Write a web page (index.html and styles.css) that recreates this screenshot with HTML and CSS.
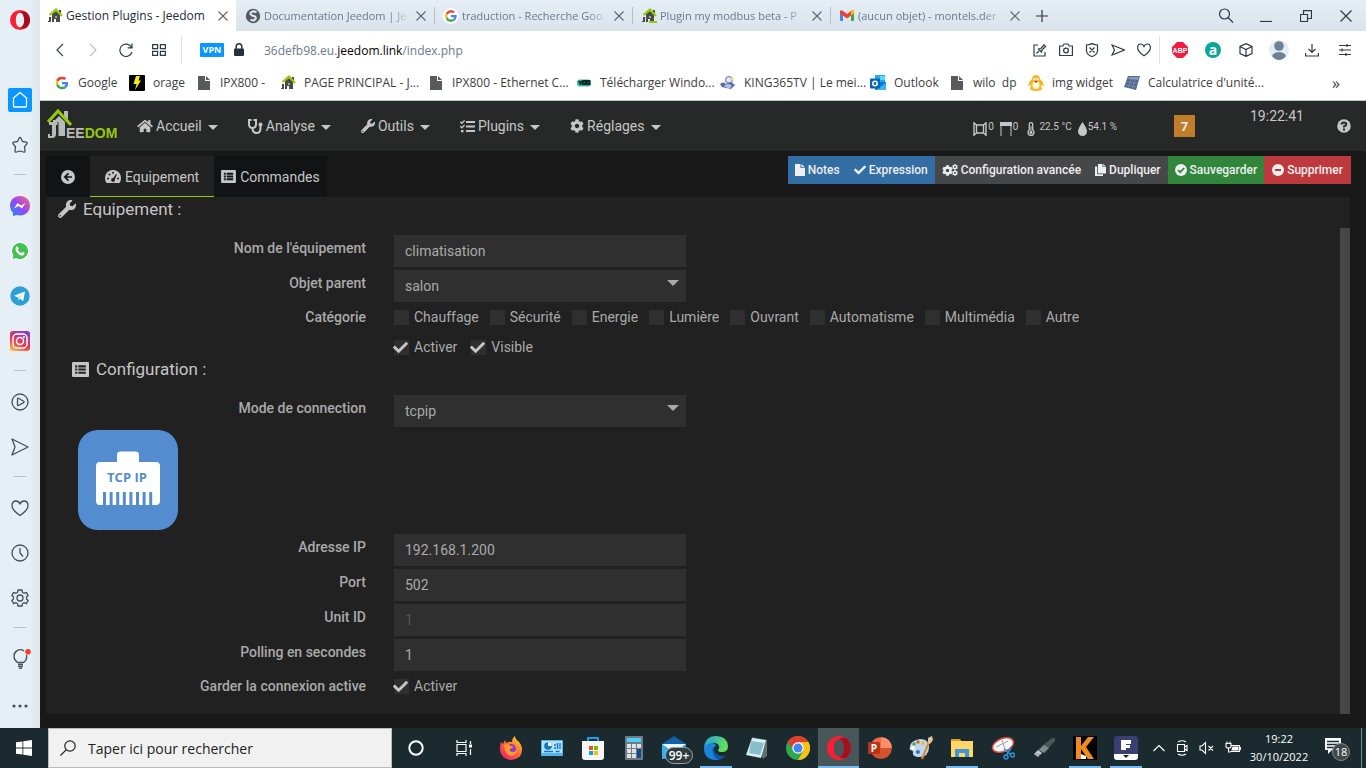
FILE: index.html
```html
<!DOCTYPE html>
<html lang="fr">
<head>
<meta charset="utf-8">
<title>Gestion Plugins - Jeedom</title>
<link rel="stylesheet" href="styles.css">
</head>
<body>
<svg class="defs" aria-hidden="true">
  <symbol id="house" viewBox="0 0 16 16"><path fill="#4a4a4a" d="M5 6l4-3 4 3v8H9v-3H7v3H5z"/><path fill="#4a4a4a" d="M12 2h2v3h-2zM2 9h2v5H1v-1h1z"/><path fill="none" stroke="#94ca02" stroke-width="2.2" d="M2.500 7L9 1.500 15 8"/><path fill="#9aa" d="M8 8h2v2H8z"/></symbol>
  <symbol id="google" viewBox="0 0 48 48"><path fill="#EA4335" d="M24 9.500c3.540 0 6.710 1.220 9.210 3.600l6.850-6.850C35.900 2.380 30.470 0 24 0 14.620 0 6.510 5.380 2.560 13.220l7.980 6.190C12.430 13.720 17.740 9.500 24 9.500z"/><path fill="#4285F4" d="M46.980 24.550c0-1.570-.15-3.090-.38-4.550H24v9.020h12.940c-.58 2.960-2.260 5.480-4.780 7.180l7.730 6c4.510-4.180 7.090-10.360 7.090-17.650z"/><path fill="#FBBC05" d="M10.530 28.590c-.48-1.450-.76-2.990-.76-4.590s.27-3.140.76-4.590l-7.980-6.190C.92 16.460 0 20.120 0 24c0 3.880.92 7.540 2.560 10.780l7.970-6.190z"/><path fill="#34A853" d="M24 48c6.480 0 11.930-2.130 15.890-5.810l-7.730-6c-2.150 1.450-4.920 2.300-8.160 2.300-6.260 0-11.570-4.220-13.470-9.910l-7.980 6.190C6.510 42.620 14.620 48 24 48z"/></symbol>
  <symbol id="close" viewBox="0 0 10 10"><path fill="none" stroke="currentColor" stroke-width="1.100" d="M.5.5l9 9M9.500.5l-9 9"/></symbol>
  <symbol id="page" viewBox="0 0 16 16"><path fill="#58595b" d="M2 1h7v5h5v9H2z"/><path fill="#58595b" d="M10 1l4 4h-4z"/></symbol>
  <symbol id="check" viewBox="0 0 512 512"><path fill="currentColor" d="M173.898 439.404l-166.400-166.400c-9.997-9.997-9.997-26.206 0-36.204l36.203-36.204c9.997-9.998 26.207-9.998 36.204 0L192 312.690 432.095 72.596c9.997-9.997 26.207-9.997 36.204 0l36.203 36.204c9.997 9.997 9.997 26.206 0 36.204l-294.400 294.401c-9.998 9.997-26.207 9.997-36.204-.001z"/></symbol>
  <symbol id="wrench" viewBox="0 0 512 512"><path fill="currentColor" d="M507.730 109.100c-2.240-9.030-13.540-12.090-20.120-5.510l-74.360 74.360-67.880-11.310-11.310-67.880 74.360-74.360c6.620-6.620 3.430-17.900-5.660-20.160-47.380-11.740-99.550.91-136.580 37.930-39.640 39.640-50.550 97.100-34.050 147.200L18.740 402.760c-24.990 24.990-24.990 65.510 0 90.500 24.990 24.990 65.510 24.990 90.500 0l213.210-213.210c50.120 16.710 107.470 5.680 147.370-34.220 37.070-37.070 49.700-89.320 37.910-136.730zM64 472c-13.250 0-24-10.750-24-24 0-13.260 10.750-24 24-24s24 10.740 24 24c0 13.250-10.750 24-24 24z"/></symbol>
  <symbol id="cog" viewBox="0 0 512 512"><path fill="currentColor" d="M487.400 315.700l-42.600-24.600c4.300-23.200 4.300-47 0-70.200l42.600-24.600c4.900-2.800 7.100-8.600 5.500-14-11.100-35.600-30-67.800-54.700-94.600-3.800-4.100-10-5.100-14.800-2.300L380.800 110c-17.900-15.400-38.500-27.300-60.800-35.100V25.800c0-5.600-3.900-10.500-9.400-11.700-36.700-8.200-74.300-7.800-109.200 0-5.500 1.200-9.400 6.100-9.400 11.700V75c-22.200 7.900-42.800 19.800-60.800 35.100L88.700 85.500c-4.900-2.800-11-1.900-14.800 2.300-24.700 26.700-43.600 58.900-54.700 94.600-1.700 5.400.6 11.200 5.500 14L67.300 221c-4.300 23.200-4.300 47 0 70.200l-42.600 24.600c-4.900 2.800-7.100 8.600-5.500 14 11.100 35.600 30 67.800 54.700 94.600 3.800 4.100 10 5.100 14.800 2.300l42.600-24.600c17.900 15.400 38.500 27.300 60.800 35.100v49.200c0 5.600 3.900 10.500 9.400 11.700 36.700 8.200 74.300 7.800 109.200 0 5.500-1.200 9.400-6.100 9.400-11.700v-49.200c22.200-7.900 42.800-19.800 60.800-35.100l42.600 24.600c4.900 2.800 11 1.900 14.800-2.300 24.700-26.700 43.600-58.900 54.700-94.600 1.500-5.500-.7-11.300-5.600-14.100zM256 336c-44.100 0-80-35.900-80-80s35.900-80 80-80 80 35.900 80 80-35.900 80-80 80z"/></symbol>
  <symbol id="list" viewBox="0 0 16 14"><path fill="currentColor" fill-rule="evenodd" d="M1 0h14q1 0 1 1v12q0 1-1 1H1q-1 0-1-1V1q0-1 1-1zM3 3v2h2V3zm0 3v2h2V6zm0 3v2h2V9zm3-6v2h7V3zm0 3v2h7V6zm0 3v2h7V9z"/></symbol>
  <symbol id="opera" viewBox="0 0 24 24"><path fill="#fa1e33" fill-rule="evenodd" d="M12 0a12 12 0 1 0 0 24a12 12 0 1 0 0-24zm0 3.200c3.200 0 5 3.800 5 8.800s-1.800 8.800-5 8.800-5-3.800-5-8.800 1.800-8.800 5-8.800z"/><path fill="#a5101c" d="M12 3.200C15 1 18 1.700 20 3.100a12 12 0 0 1 0 17.800C18 22.300 15 23 12 20.800c3.200 0 5-3.800 5-8.800s-1.800-8.800-5-8.800z"/></symbol>
</svg>

<div class="screen">
  <aside class="sidebar">
    <a class="side-logo" href="#" aria-label="Opera"><svg width="20" height="20"><use href="#opera"/></svg></a>
    <a class="side-item" href="#" aria-label="Accueil"><svg width="24" height="24" viewBox="0 0 24 24"><rect width="24" height="24" rx="2" fill="#0a96ff"/><path fill="none" stroke="#fff" stroke-width="1.300" stroke-linejoin="round" d="M5.500 10L12 4.500l6.500 5.500v8q0 1-1 1h-11q-1 0-1-1z"/></svg></a>
    <a class="side-item" href="#" aria-label="Favoris"><svg class="line" width="18" height="18" viewBox="0 0 18 18"><path d="M9 1.500q.6 0 1 .8L11.500 5.500l3.800.7q1.500.4.500 1.700L13.500 11l.5 4q0 1.600-1.500 1L9 15l-3.500 1q-1.500.6-1.500-1l.5-4L2.200 7.900q-1-1.300.5-1.700l3.800-.7L8 2.300q.4-.8 1-.8z"/></svg></a>
    <hr>
    <a class="side-item" href="#" aria-label="Messenger"><svg width="20" height="20" viewBox="0 0 20 20"><defs><linearGradient id="ms" x1="0" y1="1" x2="1" y2="0"><stop offset="0" stop-color="#1095ff"/><stop offset=".5" stop-color="#9a45f5"/><stop offset="1" stop-color="#ff6b72"/></linearGradient></defs><path fill="url(#ms)" d="M10 0c6 0 10 4.300 10 9.700s-4 9.700-10 9.700q-1.500 0-3-.4L3 20v-3Q0 14 0 9.700C0 4.300 4 0 10 0z"/><path fill="#fff" d="M4 12.500L7.500 7l3.500 2.500L15.500 7 12 12.500 8.500 10z"/></svg></a>
    <a class="side-item" href="#" aria-label="WhatsApp"><svg width="20" height="20" viewBox="0 0 20 20"><path fill="#fff" d="M10 .5a9.500 9.500 0 1 1-4.500 17.900L.7 19.500 2 14.800A9.500 9.500 0 0 1 10 .5z"/><path fill="#40c351" d="M10 2a8 8 0 1 1-4 14.900L2.500 18l1-3.500A8 8 0 0 1 10 2z"/><path fill="#fff" d="M6.500 5.500h1.300l1 2.300-.9 1.200q1 2 3.200 3l1.200-1.200 2.200 1.200q0 2.500-2.700 2.500C9 14.500 5.500 10.800 5.500 8q0-1.500 1-2.500z"/></svg></a>
    <a class="side-item" href="#" aria-label="Telegram"><svg width="20" height="20" viewBox="0 0 20 20"><circle cx="10" cy="10" r="9.700" fill="#2ca0d9"/><path fill="#fff" d="M4 9.800L15 5.500 13.200 15l-3.500-2.500L8 14.500v-3z"/><path fill="#b8dcef" d="M8 11.500l5-4-3.500 5L8 14.500z"/></svg></a>
    <a class="side-item" href="#" aria-label="Instagram"><svg width="20" height="20" viewBox="0 0 20 20"><defs><linearGradient id="ig" x1=".2" y1="1" x2=".7" y2="0"><stop offset="0" stop-color="#ffb74a"/><stop offset=".4" stop-color="#ef3b4c"/><stop offset="1" stop-color="#8a3bc8"/></linearGradient></defs><rect width="20" height="20" rx="3" fill="url(#ig)"/><g fill="none" stroke="#fff" stroke-width="1.500"><rect x="3" y="3" width="14" height="14" rx="4"/><circle cx="10" cy="10" r="3.500"/></g><circle cx="14" cy="6" r="1" fill="#fff"/></svg></a>
    <hr>
    <a class="side-item" href="#" aria-label="Lecteur"><svg class="line" width="18" height="18" viewBox="0 0 18 18"><circle cx="9" cy="9" r="8"/><path d="M6.500 6q0-1 1-.7l5.200 2.900q.8.700 0 1.400l-5.200 2.900q-1 .3-1-.7z"/></svg></a>
    <a class="side-item" href="#" aria-label="Mon flux"><svg class="line" width="18" height="18" viewBox="0 0 18 18"><path d="M1 1l16 8L1 17l3-8z"/></svg></a>
    <hr>
    <a class="side-item" href="#" aria-label="Signets"><svg class="line" width="18" height="18" viewBox="0 0 18 18"><path d="M9 16.500Q1 11 1 6.500 1 2 5 2q2.800 0 4 3 1.200-3 4-3 4 0 4 4.500Q17 11 9 16.500z"/></svg></a>
    <a class="side-item" href="#" aria-label="Historique"><svg class="line" width="18" height="18" viewBox="0 0 18 18"><circle cx="9" cy="9" r="8"/><path d="M9 4v5l3 3.500"/></svg></a>
    <a class="side-item" href="#" aria-label="Paramètres"><svg class="line" width="18" height="18" viewBox="0 0 18 18"><circle cx="9" cy="9" r="3"/><path d="M7 1h4l.5 2.500 1.500.8 2.300-.9 1.900 3.200L15.500 8v2l1.700 1.400-1.900 3.200-2.300-.9-1.500.8L11 17H7l-.5-2.500-1.500-.8-2.300.9L.8 11.400 2.500 10V8L.8 6.600l1.900-3.200 2.300.9 1.500-.8z"/></svg></a>
    <hr>
    <a class="side-item" href="#" aria-label="Astuces"><svg class="line" width="22" height="20" viewBox="0 0 22 20"><path d="M8.500 13.500Q5 11 5 7.500A6.300 6.300 0 0 1 15 2M17.500 6q1 4.500-3 7.500M8.500 13.500h6M9 15.500h5M9 17.500h5M10 19.300h3"/><circle cx="19" cy="2.800" r="2.800" fill="#ff3b2f" stroke="none"/></svg></a>
    <a class="side-item side-more" href="#" aria-label="Plus"><svg width="16" height="4" viewBox="0 0 16 4" fill="#43505e"><circle cx="2" cy="2" r="1.600"/><circle cx="8" cy="2" r="1.600"/><circle cx="14" cy="2" r="1.600"/></svg></a>
  </aside>

  <div class="browser">
    <header class="tabbar">
      <div class="tab tab-active"><svg width="16" height="16"><use href="#house"/></svg><span>Gestion Plugins - Jeedom</span><button aria-label="Fermer"><svg width="10" height="10"><use href="#close"/></svg></button></div>
      <div class="tab"><svg width="16" height="16" viewBox="0 0 16 16"><circle cx="8" cy="8" r="7.200" fill="#555b61"/><path fill="none" stroke="#e3eaf2" stroke-width="2" d="M11.500 4.500Q9 2.500 6.500 4T7 7.500l3 1q2 1.500-.5 3.500-2 1-4-.5"/></svg><span>Documentation Jeedom | Je</span><button aria-label="Fermer"><svg width="10" height="10"><use href="#close"/></svg></button></div>
      <div class="tab"><svg class="disc" width="16" height="16"><use href="#google"/></svg><span>traduction - Recherche Goo</span><button aria-label="Fermer"><svg width="10" height="10"><use href="#close"/></svg></button></div>
      <div class="tab"><svg width="16" height="16" viewBox="0 0 16 16"><use href="#house"/><path fill="#94ca02" d="M8 13h8v2H8z"/></svg><span>Plugin my modbus beta - P</span><button aria-label="Fermer"><svg width="10" height="10"><use href="#close"/></svg></button></div>
      <div class="tab"><svg width="16" height="16" viewBox="0 0 16 16"><path fill="#4285f4" d="M1 4h3v9H2q-1 0-1-1z"/><path fill="#34a853" d="M12 4h3v8q0 1-1 1h-2z"/><path fill="#ea4335" d="M1 3q1-1.500 3 0l4 3 4-3q2-1.500 3 0v2.500L8 10.500 1 5.500z"/><path fill="#fbbc04" d="M12 3q2-1.500 3 0v2.500l-3 2z"/></svg><span>(aucun objet) - montels.der</span><button aria-label="Fermer"><svg width="10" height="10"><use href="#close"/></svg></button></div>
      <button class="newtab" aria-label="Nouvel onglet"><svg width="12" height="12" viewBox="0 0 12 12"><path stroke="#333" stroke-width="1.200" d="M6 0v12M0 6h12"/></svg></button>
      <div class="winctl">
        <button aria-label="Rechercher"><svg class="dark" width="16" height="16" viewBox="0 0 16 16"><circle cx="6.500" cy="6" r="5"/><path d="M10 9.500l5 5"/></svg></button>
        <button aria-label="Réduire"><svg class="dark" width="12" height="12" viewBox="0 0 12 12"><path d="M0 11.500h12"/></svg></button>
        <button aria-label="Restaurer"><svg class="dark" width="12" height="12" viewBox="0 0 12 12"><path d="M.5 4.500h7v7h-7zM3.500 4V.6h8v7.900H8"/></svg></button>
        <button aria-label="Fermer la fenêtre"><svg class="dark" width="12" height="12" viewBox="0 0 12 12"><path d="M.5.5l11 11M11.500.5l-11 11"/></svg></button>
      </div>
    </header>

    <nav class="toolbar">
      <button aria-label="Retour"><svg class="dark" width="14" height="14" viewBox="0 0 14 14"><path d="M10 .8L4 7l6 6.200"/></svg></button>
      <button aria-label="Avancer"><svg class="dark faded" width="14" height="14" viewBox="0 0 14 14"><path d="M4 .8L10 7l-6 6.200"/></svg></button>
      <button aria-label="Recharger"><svg class="dark" width="14" height="14" viewBox="0 0 14 14"><path d="M12.600 4.500A6.200 6.200 0 1 0 13 9M13 .5v4.300H8.700"/></svg></button>
      <button aria-label="Accès rapide"><svg class="dark" width="14" height="12" viewBox="0 0 14 12"><path d="M.6.6h5v4h-5zM8.400.6h5v4h-5zM.6 7.400h5v4h-5zM8.400 7.400h5v4h-5z"/></svg></button>
      <i class="vsep"></i>
      <span class="vpn">VPN</span>
      <svg class="lock" width="12" height="14" viewBox="0 0 12 14"><rect x="1" y="5.500" width="10" height="7.500" rx="1" fill="#25323c"/><path fill="none" stroke="#25323c" stroke-width="1.500" d="M3.200 6V3.600a2.800 2.800 0 0 1 5.600 0V6"/></svg>
      <div class="url" role="textbox" aria-label="Adresse">36defb98.eu.<b>jeedom.link</b>/index.php</div>
      <div class="tools">
        <button aria-label="Annoter"><svg class="dark" width="14" height="14" viewBox="0 0 14 14"><path d="M5 2H1v11h11V9M3.500 10.500L6 8M5 5.500l4 4M5.500 6L8 5.500 11 2l1.500 1.500L9 7l-.5 2M10.500 1.500l2.500 2.500"/></svg></button>
        <button aria-label="Capture"><svg class="dark" width="14" height="14" viewBox="0 0 14 14"><path d="M.6 3h3.200L5 1h4l1.200 2h3.200v9.500H.6z"/><circle cx="7" cy="7.500" r="2.400"/></svg></button>
        <button aria-label="Bloqueur"><svg class="dark" width="14" height="14" viewBox="0 0 14 14"><path d="M1.500 2Q4 2 7 .6 10 2 12.500 2v6Q12 12 7 13.500 2 12 1.500 8zM4.500 4.500l5 5M9.500 4.500l-5 5"/></svg></button>
        <button aria-label="Envoyer"><svg class="dark" width="14" height="14" viewBox="0 0 14 14"><path d="M1 2l12.500 5L1 12l2.500-5z"/></svg></button>
        <button aria-label="Favori"><svg class="dark" width="14" height="14" viewBox="0 0 14 14"><path d="M7 12.800Q.6 8.500.6 4.800.6 1 3.800 1 6 1 7 3.400 8 1 10.200 1q3.200 0 3.200 3.800Q13.400 8.500 7 12.800z"/></svg></button>
      </div>
      <i class="vsep"></i>
      <div class="exts">
        <button aria-label="Adblock Plus"><svg width="16" height="16" viewBox="0 0 16 16"><path fill="#ef1d41" d="M5 0h6l5 5v6l-5 5H5l-5-5V5z"/><text x="8" y="10.500" text-anchor="middle" class="abp">ABP</text></svg></button>
        <button aria-label="Alexa"><svg width="16" height="16" viewBox="0 0 16 16"><circle cx="8" cy="8" r="8" fill="#07a897"/><text x="8" y="12.500" text-anchor="middle" class="alexa">a</text></svg></button>
        <button aria-label="Extensions"><svg class="dark" width="14" height="14" viewBox="0 0 14 14"><path d="M7 .6l6 2.900v7L7 13.400l-6-2.900v-7zM1 3.500l6 3 6-3M7 6.500v7"/></svg></button>
        <button aria-label="Profil"><svg width="20" height="20" viewBox="0 0 20 20"><circle cx="10" cy="10" r="10" fill="#e3ecf4"/><circle cx="10" cy="6" r="4.800" fill="#6d8195"/><path fill="#6d8195" d="M3 16q2-4 7-4t7 4q-3 4-7 4t-7-4z"/></svg></button>
        <button aria-label="Téléchargements"><svg class="dark" width="14" height="14" viewBox="0 0 14 14"><path d="M7 1v8.500M3.500 6L7 9.500 10.500 6M.6 10v3h12.800v-3"/></svg></button>
        <button aria-label="Réglages rapides"><svg class="dark" width="12" height="12" viewBox="0 0 12 12"><path d="M0 1.500h12M0 6h12M0 10.500h12M8 0v3M3 4.500v3M7 9v3"/></svg></button>
      </div>
    </nav>

    <nav class="bookmarks">
      <a href="#"><svg width="16" height="16" viewBox="-2 -2 20 20"><use href="#google" width="16" height="16"/></svg>Google</a>
      <a href="#"><svg width="16" height="16" viewBox="0 0 16 16"><rect width="16" height="16" rx="1" fill="#000"/><path fill="#f7ec13" d="M7 1h4L9.500 5.500H12L6 15l1.500-6H4.500z"/></svg>orage</a>
      <a href="#"><svg width="16" height="16"><use href="#page"/></svg>IPX800 -</a>
      <a href="#"><svg width="16" height="16"><use href="#house"/></svg>PAGE PRINCIPAL - J...</a>
      <a href="#"><svg width="16" height="16"><use href="#page"/></svg>IPX800 - Ethernet C...</a>
      <a href="#"><svg width="16" height="16" viewBox="0 0 16 16"><rect x="1" y="4.500" width="14" height="7" rx="3" fill="#2fb9a3"/><path stroke="#092b26" stroke-width="1.800" fill="none" d="M3 6l1.500 2.500L6 6M4.500 8v2M7 6h2.500v3H7zM11 6h2.500v3H11z"/></svg>Télécharger Windo...</a>
      <a href="#"><svg width="16" height="16" viewBox="0 0 16 16"><circle cx="9" cy="5" r="3.500" fill="#dbe6fa" stroke="#5a6da8"/><path fill="#5969a5" d="M0 9q3-3 6 0 4-4 9 1l-4 4-9-2z"/><path fill="#b7c3e6" d="M4 11q4-4 8 0l-3 3z"/><circle cx="12" cy="4" r="1.500" fill="#f5d77e"/></svg>KING365TV | Le mei...</a>
      <a href="#"><svg width="16" height="16" viewBox="0 0 16 16"><path fill="#28a8ea" d="M5 0h10v8H5z"/><path fill="#50d9ff" d="M10 1h5v4h-5z"/><path fill="#0f78d4" d="M5 7h11v8H5z"/><path fill="#35b8f1" d="M16 8v7H6z"/><rect y="3.500" width="10" height="10" rx="1" fill="#0564b5"/><circle cx="5" cy="8.500" r="2.200" fill="none" stroke="#fff" stroke-width="1.500"/></svg>Outlook</a>
      <a href="#" class="pre"><svg width="16" height="16"><use href="#page"/></svg>wilo  dp</a>
      <a href="#"><svg width="16" height="16" viewBox="0 0 16 16"><path fill="#f5b82e" d="M8 0q4 0 4 4 3 2 4 7l-3-1 1 5q-6 2-12 0l1-5-3 1q1-5 4-7 0-4 4-4z"/><ellipse cx="8" cy="10" rx="3.500" ry="4" fill="#fff6d8"/><circle cx="6.500" cy="4" r="1.100" fill="#fff"/><circle cx="9.500" cy="4" r="1.100" fill="#fff"/><path fill="#7a4d12" d="M6 6h4l-2 2z"/></svg>img widget</a>
      <a href="#"><svg width="16" height="16" viewBox="0 0 16 16"><path fill="#53688f" d="M4 1h12l-4 14L0 12z"/><path fill="#8798b8" d="M5 2h10l-1 3-10-1z"/><path stroke="#7b8db0" stroke-width=".8" d="M3 7l10 1.500M2 10l10 2M7 5L4 13M11 5L8 14"/></svg>Calculatrice d'unité...</a>
      <button aria-label="Plus de signets">»</button>
    </nav>

    <div class="jeedom">
      <header class="jbar">
        <a class="logo" href="#" aria-label="Jeedom"><svg width="70" height="32" viewBox="0 0 70 32"><path fill="#b9bbb9" d="M6 14l6-6 6 6v14h-7V17h-2v9q0 4-4 4H1v-4h2v2h2V17H2v-3zM6 12h3v2H6z"/><path fill="#b9bbb9" d="M17 3h4v9l-4-4z"/><path stroke="#272928" d="M11 14v14"/><path fill="none" stroke="#93c90f" stroke-width="3.200" d="M1 14L11 3l13 14"/><text class="logo-text" x="19" y="30"><tspan fill="#b9bbb9">EE</tspan><tspan fill="#93c90f">DOM</tspan></text></svg></a>
        <nav class="jmenu">
          <a href="#"><svg width="16" height="14" viewBox="0 0 576 512"><path fill="currentColor" d="M280.370 148.260L96 300.110V464a16 16 0 0 0 16 16l112.060-.29a16 16 0 0 0 15.920-16V368a16 16 0 0 1 16-16h64a16 16 0 0 1 16 16v95.640a16 16 0 0 0 16 16.050L464 480a16 16 0 0 0 16-16V300L295.670 148.260a12.190 12.190 0 0 0-15.300 0zM571.600 251.470L488 182.560V44.050a12 12 0 0 0-12-12h-56a12 12 0 0 0-12 12v72.610L318.470 43a48 48 0 0 0-61 0L4.340 251.470a12 12 0 0 0-1.600 16.900l25.500 31A12 12 0 0 0 45.150 301l235.220-193.740a12.190 12.190 0 0 1 15.300 0L530.900 301a12 12 0 0 0 16.900-1.600l25.500-31a12 12 0 0 0-1.700-16.930z"/></svg>Accueil<i class="caret"></i></a>
          <a href="#"><svg width="15" height="15" viewBox="0 0 15 15"><path fill="none" stroke="currentColor" stroke-width="2" d="M3.500 1H1v4q0 4 3.500 4T8 5V1H5.500M4.500 9q0 5 4 5t4-5V7"/><circle cx="12.500" cy="5.500" r="2" fill="currentColor"/></svg>Analyse<i class="caret"></i></a>
          <a href="#"><svg width="14" height="14"><use href="#wrench"/></svg>Outils<i class="caret"></i></a>
          <a href="#"><svg width="15" height="13" viewBox="0 0 15 13"><path fill="currentColor" d="M6 1h9v2H6zM6 5.500h9v2H6zM6 10h9v2H6zM1 10h2.500v2.300H1z"/><path fill="none" stroke="currentColor" stroke-width="1.400" d="M.3 1.800l1.500 1.500L4.600.5M.3 6.300l1.500 1.500L4.600 5"/></svg>Plugins<i class="caret"></i></a>
          <a href="#"><svg width="14" height="14"><use href="#cog"/></svg>Réglages<i class="caret"></i></a>
        </nav>
        <div class="summary">
          <svg width="14" height="14" viewBox="0 0 14 14"><path fill="none" stroke="currentColor" stroke-width="1.400" d="M1 0v14M13 0v14M3.500 3h7v8h-7zM1 1l2.500 2M13 1l-2.500 2M1 13l2.500-2M13 13l-2.500-2"/></svg><span>0</span>
          <svg width="12" height="14" viewBox="0 0 12 14"><path fill="currentColor" d="M0 0h12v4H0z"/><path stroke="currentColor" d="M1 4v10M11 4v10"/></svg><span>0</span>
          <svg class="thermo" width="8" height="14" viewBox="0 0 8 14"><path fill="none" stroke="currentColor" stroke-width="1.300" d="M2.300 8V2.300a1.700 1.700 0 0 1 3.400 0V8a3 3 0 1 1-3.400 0z"/><circle cx="4" cy="10.500" r="1.600" fill="currentColor"/><path stroke="currentColor" d="M4 4v6"/></svg><span>22.5 °C</span>
          <svg width="9" height="14" viewBox="0 0 9 14"><path fill="currentColor" d="M4.500 0Q9 6.500 9 9.500a4.500 4.500 0 0 1-9 0Q0 6.500 4.500 0z"/></svg><span>54.1 %</span>
        </div>
        <a class="count" href="#">7</a>
        <span class="jclock">19:22:41</span>
        <a class="help" href="#" aria-label="Aide"><svg width="14" height="14" viewBox="0 0 14 14"><circle cx="7" cy="7" r="6.800" fill="currentColor"/><path fill="none" stroke="#272928" stroke-width="2" d="M4.500 5.500Q4.800 3.500 7 3.500t2.300 1.800Q9.300 6.500 7 7.500v1M7 9.500v2"/></svg></a>
      </header>

      <main class="jmain">
        <div class="topline">
          <nav class="jtabs">
            <a class="jback" href="#" aria-label="Retour"><svg width="14" height="14" viewBox="0 0 14 14"><circle cx="7" cy="7" r="7" fill="currentColor"/><path fill="none" stroke="#111315" stroke-width="1.700" d="M7.500 3.300L3.800 7l3.700 3.700M4 7h7"/></svg></a>
            <a class="jtab jtab-on" href="#"><svg width="16" height="14" viewBox="0 0 16 14"><path fill="currentColor" d="M8 0a8 8 0 0 1 8 8q0 3-1.500 5h-13Q0 11 0 8a8 8 0 0 1 8-8z"/><g fill="#222"><circle cx="3" cy="8.500" r="1"/><circle cx="4.500" cy="4.500" r="1"/><circle cx="8" cy="2.800" r="1"/><circle cx="13" cy="8.500" r="1"/><circle cx="8" cy="10" r="1.900"/><path d="M7.500 9l3.500-5 1 .6L9.500 10z"/></g></svg>Equipement</a>
            <a class="jtab" href="#"><svg width="15" height="13"><use href="#list"/></svg>Commandes</a>
          </nav>
          <div class="actions">
            <button class="blue"><svg width="10" height="12" viewBox="0 0 10 12"><path fill="currentColor" d="M0 0h5.500v4H10v8H0zM6.500 0L10 3.200H6.500z"/></svg>Notes</button>
            <button class="blue"><svg width="12" height="12"><use href="#check"/></svg>Expression</button>
            <button class="grey"><svg width="16" height="12" viewBox="0 0 16 12"><svg width="11" height="11" y="1"><use href="#cog"/></svg><svg width="6" height="6" x="10"><use href="#cog"/></svg><svg width="6" height="6" x="10" y="6"><use href="#cog"/></svg></svg>Configuration avancée</button>
            <button class="grey"><svg width="11" height="12" viewBox="0 0 11 12"><path fill="currentColor" d="M3 0h4.500v3H11v6.500H3zM8.200 0L11 2.500H8.200zM0 2.500h2.200v7.800H8V12H0z"/></svg>Dupliquer</button>
            <button class="green"><svg width="12" height="12" viewBox="0 0 12 12"><circle cx="6" cy="6" r="6" fill="currentColor"/><path fill="none" stroke="#31863b" stroke-width="1.700" d="M3 6l2.200 2.200L9.200 4"/></svg>Sauvegarder</button>
            <button class="red"><svg width="12" height="12" viewBox="0 0 12 12"><circle cx="6" cy="6" r="6" fill="currentColor"/><path stroke="#bd393d" stroke-width="2" d="M3 6h6"/></svg>Supprimer</button>
          </div>
        </div>

        <form class="panel">
          <h2><svg width="18" height="18"><use href="#wrench"/></svg>Equipement :</h2>
          <div class="row"><label for="nom">Nom de l'équipement</label><div class="field"><input id="nom" type="text" value="climatisation"></div></div>
          <div class="row"><label for="obj">Objet parent</label><div class="field select"><select id="obj"><option>salon</option></select></div></div>
          <div class="row checks"><span class="lab">Catégorie</span><div class="opts">
            <label><input type="checkbox">Chauffage</label><label><input type="checkbox">Sécurité</label><label><input type="checkbox">Energie</label><label><input type="checkbox">Lumière</label><label><input type="checkbox">Ouvrant</label><label><input type="checkbox">Automatisme</label><label><input type="checkbox">Multimédia</label><label><input type="checkbox">Autre</label></div></div>
          <div class="row checks last"><span class="lab"></span><div class="opts wide">
            <label><span class="tick"><input type="checkbox" checked><svg width="15" height="15"><use href="#check"/></svg></span>Activer</label><label><span class="tick"><input type="checkbox" checked><svg width="15" height="15"><use href="#check"/></svg></span>Visible</label></div></div>
          <h2 class="sub"><svg width="17" height="15"><use href="#list"/></svg>Configuration :</h2>
          <div class="row"><label for="mode">Mode de connection</label><div class="field select"><select id="mode"><option>tcpip</option></select></div></div>
          <svg class="tcp" width="100" height="100" viewBox="0 0 100 100" role="img" aria-label="TCP IP"><rect width="100" height="100" rx="20" fill="#538dd0"/><path fill="#fff" d="M22 32h17v-7q0-3.500 3.500-3.500h15q3.500 0 3.500 3.500v7h17q4 0 4 4v35q0 4-4 4H22q-4 0-4-4V36q0-4 4-4z"/><path fill="#538dd0" d="M25 62h3v13h-3zM31.600 62h3v13h-3zM38.200 62h3v13h-3zM44.800 62h3v13h-3zM51.400 62h3v13h-3zM58 62h3v13h-3zM64.600 62h3v13h-3zM71.200 62h3v13h-3z"/><text class="tcp-text" x="49" y="52" text-anchor="middle">TCP IP</text></svg>
          <div class="row"><label for="ip">Adresse IP</label><div class="field"><input id="ip" type="text" value="192.168.1.200"></div></div>
          <div class="row"><label for="port">Port</label><div class="field"><input id="port" type="text" value="502"></div></div>
          <div class="row"><label for="unit">Unit ID</label><div class="field"><input id="unit" type="text" placeholder="1"></div></div>
          <div class="row"><label for="poll">Polling en secondes</label><div class="field"><input id="poll" type="text" value="1"></div></div>
          <div class="row checks"><label for="keep" class="lab">Garder la connexion active</label><div class="opts"><label><span class="tick"><input id="keep" type="checkbox" checked><svg width="15" height="15"><use href="#check"/></svg></span>Activer</label></div></div>
          <i class="scroll"></i>
        </form>
      </main>
    </div>
  </div>
</div>

<footer class="taskbar">
  <button class="start" aria-label="Démarrer"><svg width="16" height="16" viewBox="0 0 16 16" fill="#fff"><path d="M0 2.300L6.500 1.400v6.200H0zM7.300 1.300L16 0v7.600H7.300zM0 8.400h6.500v6.200L0 13.700zM7.300 8.400H16V16l-8.700-1.300z"/></svg></button>
  <label class="search"><svg width="16" height="16" viewBox="0 0 16 16"><circle cx="10" cy="6" r="5.200" fill="none" stroke="#222" stroke-width="1.200"/><path stroke="#222" stroke-width="1.200" d="M6.300 9.700L.5 15.500"/></svg><input type="search" placeholder="Taper ici pour rechercher" aria-label="Rechercher"></label>
  <div class="sys">
    <button aria-label="Cortana"><svg width="16" height="16" viewBox="0 0 16 16"><circle cx="8" cy="8" r="6.700" fill="none" stroke="#fff" stroke-width="2"/></svg></button>
    <button aria-label="Vue des tâches"><svg width="16" height="16" viewBox="0 0 16 16"><path fill="none" stroke="#fff" stroke-width="1.200" d="M1 0v2.500h9V0M1 16v-2.500h9V16M1 4.500h9v7H1zM14.500 1v3M14.500 9v6"/><path fill="#fff" d="M13 4.500h3v3h-3z"/></svg></button>
  </div>
  <div class="apps">
    <button aria-label="Firefox"><svg width="24" height="24" viewBox="0 0 24 24"><defs><linearGradient id="ff" x1="1" y1="0" x2=".2" y2="1"><stop offset="0" stop-color="#ffe226"/><stop offset=".5" stop-color="#ff7139"/><stop offset="1" stop-color="#ef1c6c"/></linearGradient></defs><path fill="url(#ff)" d="M2 6l2 2 2-4 1 3q3-2 6-1 0-4 3-6 0 3 4 6 3 3 3 8 0 9-11 10Q2 23 1 14q0-5 1-8z"/><circle cx="12" cy="13" r="5" fill="#8a3bd0"/><path fill="#ff9a2c" d="M5 9q4-2 7 1l3 1-4 2q-1 3 3 3 4-1 4-4 1 7-6 8-6-1-7-11z"/></svg></button>
    <button aria-label="Panneau de configuration"><svg width="22" height="16" viewBox="0 0 22 16"><rect width="22" height="16" rx="1" fill="#50b5ec"/><path fill="#b7e2f8" d="M1 1h20v12H1z"/><circle cx="7" cy="6" r="3.800" fill="#1376c4"/><path fill="#fff" d="M7 6V2.200A3.800 3.800 0 0 1 10.800 6z"/><path stroke="#1376c4" stroke-width="1.400" d="M13 5h2M13 8h2M3 11.500h9M14.500 11.500h4M16.500 3v6M19 3v6"/></svg></button>
    <button aria-label="Microsoft Store"><svg width="24" height="24" viewBox="0 0 24 24"><path fill="none" stroke="#18a0ef" stroke-width="2" d="M7 6V2h10v4"/><path fill="#f6f6f6" d="M1 5h22v16q0 3-3 3H4q-3 0-3-3z"/><path fill="#f25022" d="M8 10h4v4H8z"/><path fill="#7fba00" d="M13 10h4v4h-4z"/><path fill="#00a4ef" d="M8 15h4v4H8z"/><path fill="#ffb900" d="M13 15h4v4h-4z"/></svg></button>
    <button aria-label="Calculatrice"><svg width="18" height="24" viewBox="0 0 18 24"><rect width="18" height="24" rx="1" fill="#6f7a82"/><path fill="#4ed0f5" d="M2 2h14v4H2z"/><path fill="#dde2e6" d="M2 8h4v4H2zM7 8h4v4H7zM12 8h4v4h-4zM2 13h4v4H2zM7 13h4v4H7zM2 18h4v4H2zM7 18h4v4H7z"/><path fill="#144a83" d="M12 13h4v9h-4z"/></svg></button>
    <button aria-label="Courrier"><svg class="mailbox" width="32" height="28" viewBox="0 0 32 28"><path fill="#1260a8" d="M1 8l12-8 12 8z"/><path fill="#1f93e0" d="M1 8h24v15H1z"/><path fill="#e9f5ff" d="M1 8h24l-12 9z"/><path fill="#36b1f4" d="M1 8l12 10L1 23z"/><rect x="4.500" y="11.500" width="27" height="16" rx="8" fill="#303b40" stroke="#9aa0a3"/><text x="18" y="24" text-anchor="middle" class="mail">99+</text></svg></button>
    <button class="run" aria-label="Edge"><svg width="24" height="24" viewBox="0 0 24 24"><defs><linearGradient id="ed" x1="0" y1="0" x2="1" y2=".3"><stop offset="0" stop-color="#1e9ee8"/><stop offset="1" stop-color="#62e05a"/></linearGradient></defs><path fill="#0c59a4" d="M0 12q0 12 12 12 6 0 10-5-4 2-8 0-6-3-3-9Q3 6 0 12z"/><path fill="#1a84d8" d="M0 12q3-6 9-5 3 1 3 3-5 1-3 8 2 5 6 6H12Q0 23 0 12z"/><path fill="url(#ed)" d="M0 12Q1 0 12 0q11 0 12 10 0 6-6 6-4 0-4-2 2-2 1-4-2-4-8-3-5 1-7 5z"/></svg></button>
    <button aria-label="Bloc-notes"><svg width="24" height="24" viewBox="0 0 24 24"><path fill="#5c7076" d="M7 1l15 3v16l-4 3z"/><path fill="#d9eef0" d="M7 2l14 2-5 18L1 19z"/><path fill="#86bfca" d="M6 5l13 2-4 12-11-2z"/></svg></button>
    <button aria-label="Chrome"><svg width="24" height="24" viewBox="0 0 24 24"><circle cx="12" cy="12" r="12" fill="#2fa84f"/><path fill="#e33b2e" d="M12 12H6.800L1.600 6A12 12 0 0 1 22.400 6H12z"/><path fill="#fbc116" d="M12 6h10.400A12 12 0 0 1 12 24l5.200-9z"/><circle cx="12" cy="12" r="5.700" fill="#fff"/><circle cx="12" cy="12" r="4.500" fill="#4285f4"/></svg></button>
    <button class="run on" aria-label="Opera"><svg width="24" height="24"><use href="#opera"/></svg></button>
    <button aria-label="PowerPoint"><svg width="24" height="22" viewBox="0 0 24 22"><circle cx="13" cy="11" r="10.800" fill="#d35230"/><path fill="#ff8f6b" d="M13 .2A10.800 10.800 0 0 1 23.800 11H13z"/><path fill="#ed6c47" d="M13 .2V11H2.200Q3 1 13 .2z"/><rect y="5" width="12" height="12" rx="1" fill="#b7331a"/><text x="6" y="15" text-anchor="middle" class="ppt">P</text></svg></button>
    <button aria-label="Paint"><svg width="24" height="24" viewBox="0 0 24 24"><path fill="#bfd9ec" d="M11 3q9 0 9 8 0 10-10 10-7 0-6-5 0-2-3-2Q-1 5 11 3z"/><circle cx="4" cy="12" r="2" fill="#fff"/><circle cx="5" cy="8" r="1.700" fill="#47b04b"/><circle cx="9" cy="6" r="1.700" fill="#e9573d"/><circle cx="14" cy="7" r="1.700" fill="#f3b829"/><circle cx="9" cy="16" r="2" fill="#3671c6"/><path stroke="#d98832" stroke-width="2" d="M20 6l-7 17"/><path fill="#e7c198" d="M19 2l4-2 1 4-3 4-2-1z"/></svg></button>
    <button class="run" aria-label="Explorateur"><svg width="22" height="20" viewBox="0 0 22 20"><path fill="#e0a021" d="M0 1h9l2 3H0z"/><path fill="#ffd667" d="M0 3h22v16H0z"/><path fill="#3f93d8" d="M4 11h14v8h-4v-4H8v4H4z"/></svg></button>
    <button aria-label="Outil Capture"><svg width="24" height="24" viewBox="0 0 24 24"><ellipse cx="12" cy="9" rx="11" ry="6.500" transform="rotate(-22 12 9)" fill="#f5f7f9" stroke="#d8483f" stroke-width="1.500"/><path stroke="#95a4ad" d="M5 11l12-6M11 4l4 12"/><path fill="none" stroke="#2b8fd8" stroke-width="1.600" d="M13 13l7 6M20 12l-5 8"/><circle cx="21.500" cy="19" r="2" fill="none" stroke="#2b8fd8" stroke-width="1.500"/><circle cx="15" cy="21" r="2" fill="none" stroke="#2b8fd8" stroke-width="1.500"/></svg></button>
    <button aria-label="Clé USB"><svg width="24" height="22" viewBox="0 0 24 22"><path fill="#4b5359" d="M11 8l9-7q4-1 3 3L12 16l-6-3z"/><path fill="#7f888d" d="M12 8l5 3-5 5-5-3z"/><path fill="#c5cacd" d="M6 13l4 3-4 4-4-3z"/><path fill="#555" d="M4.500 16l1 1-1 1zM7 17l1 1-2 1z"/></svg></button>
    <button class="run" aria-label="K"><svg width="24" height="24" viewBox="0 0 24 24"><path fill="#000" d="M0 0h24v24H0z"/><path fill="#f28b1e" d="M3 1h5v9l7-9h6l-8 10 8 12h-6L8 13v10H3z"/><path fill="#fff" d="M8 18l5 2v3H8z"/></svg></button>
    <button class="run" aria-label="F"><svg width="24" height="24" viewBox="0 0 24 24"><rect width="24" height="23" rx="3" fill="#3a3f70"/><path fill="#fff" d="M7 4h10v4h-5v1h4v3h-4v2H7z"/><path fill="#fff" d="M0 18h24v3q0 3-3 3H3q-3 0-3-3z"/><path fill="#222" d="M9 19h6l-3 3z"/></svg></button>
  </div>
  <div class="tray">
    <svg width="12" height="8" viewBox="0 0 12 8"><path d="M.5 7L6 1.500 11.500 7"/></svg>
    <svg width="12" height="16" viewBox="0 0 12 16"><path d="M1.500 4.500h7v7h-7zM8.500 7l2.500-1.500v5L8.500 9M2 2Q6-.5 10 2M2 14q4 2.500 8 0"/></svg>
    <svg width="15" height="14" viewBox="0 0 15 14"><path d="M1 5h2l3.500-3.500v11L3 9H1zM9.500 5l4.500 4.500M14 5L9.500 9.500"/></svg>
    <svg width="16" height="14" viewBox="0 0 16 14"><path d="M5.500 4.500h9v6h-9M15.500 6v3M1 2.500h5v3Q6 7 3.500 7T1 5.500zM2 .5v2M5 .5v2M3.500 7v4h2"/><path fill="#fff" d="M8 6h5v3H7z"/></svg>
  </div>
  <time class="tclock">19:22<br>30/10/2022</time>
  <button class="notif" aria-label="Notifications"><svg width="26" height="26" viewBox="0 0 26 26"><path fill="#fff" d="M1 3h16v12H8l-4 4v-4H1z"/><path stroke="#1a2a2f" stroke-width="1.300" d="M3 6.500h12M3 9.500h12M3 12.500h8"/><circle cx="17" cy="17" r="8.500" fill="#41484c" stroke="#858b8e"/><text x="17" y="21" text-anchor="middle" class="nnum">18</text></svg></button>
</footer>
</body>
</html>
```
FILE: styles.css
```css
* { box-sizing: border-box; }
body {
  margin: 0;
  min-height: 100vh;
  display: flex;
  flex-direction: column;
  background: #191919;
  font-family: "Open Sans", "Noto Sans", sans-serif;
  font-size: 12px;
}
a { color: inherit; text-decoration: none; }
button { border: 0; padding: 0; background: none; font: inherit; color: inherit; }
svg { flex: none; display: block; }
.defs { position: absolute; width: 0; height: 0; }
.screen { flex: 1; display: flex; min-height: 0; }

/* Opera sidebar */
.sidebar {
  flex: none;
  width: 40px;
  display: flex;
  flex-direction: column;
  background: linear-gradient(90deg, #e6eef6 70%, #dfe7ee);
}
.side-logo { height: 77px; padding: 10px; }
.side-item { height: 45px; display: flex; align-items: center; justify-content: center; }
.side-more { margin-top: 3px; height: 43px; }
.sidebar hr { width: 12px; height: 1px; margin: 7px auto 8px; border: 0; background: #b3c2d0; }
.line { fill: none; stroke: #43505e; stroke-width: 1.300; stroke-linejoin: round; }

/* Browser chrome */
.browser { flex: 1; min-width: 0; display: flex; flex-direction: column; }
.tabbar { display: flex; height: 31px; background: linear-gradient(#e5edf5, #dae2eb); color: #697b8d; }
.tab {
  width: 198px;
  display: flex;
  align-items: center;
  gap: 3px;
  padding: 0 5px 0 9px;
  position: relative;
  font-size: 11px;
}
.tab + .tab:not(:nth-child(2))::before {
  content: "";
  position: absolute;
  left: 0;
  top: 7px;
  height: 17px;
  border-left: 1px solid #b5c0cc;
}
.tab span {
  flex: 1;
  white-space: nowrap;
  mask-image: linear-gradient(90deg, #000 86%, transparent);
}
.tab button { width: 16px; height: 16px; display: grid; place-items: center; color: #5b6671; }
.tab-active { width: 196px; padding-left: 7px; background: #fff; color: #1d2b39; font-size: 12px; }
.tab-active span { mask-image: none; }
.disc { background: #fff; border-radius: 50%; padding: 2px; }
.newtab { width: 28px; display: grid; place-items: center; }
.winctl { margin-left: auto; display: flex; }
.winctl button { width: 40px; display: grid; place-items: center; }
.dark { fill: none; stroke: #2f3a44; stroke-width: 1.200; }
.faded { stroke: #b9bec3; }
.toolbar { height: 38px; display: flex; align-items: center; padding: 0 5px 0 3px; background: #fff; }
.toolbar > button { width: 33px; height: 30px; display: grid; place-items: center; }
.vsep { width: 1px; height: 28px; margin: 0 3px 0 2px; background: #dfe3e7; }
.toolbar > button + .vsep { margin: 0 18px 0 6px; }
.vpn {
  width: 24px;
  height: 14px;
  border-radius: 1px;
  background: #0a96ff;
  color: #fff;
  font: bold 9px/14px "Open Sans", sans-serif;
  text-align: center;
}
.lock { margin: 0 19px 0 9px; }
.url { flex: 1; color: #697b8d; white-space: nowrap; }
.url b { font-weight: 400; color: #000; }
.tools, .exts { display: flex; }
.tools button { width: 26px; height: 30px; display: grid; place-items: center; }
.exts button { width: 33px; height: 30px; display: grid; place-items: center; }
.abp { font: bold 7px "Liberation Sans", sans-serif; fill: #fff; }
.alexa { font: bold 14px "Open Sans", sans-serif; fill: #fff; }
.bookmarks {
  height: 32px;
  display: grid;
  grid-template-columns: 75px 67px 84px 148px 148px 144px 150px 79px 79px 96px 1fr 34px;
  padding: 0 13px 4px 14px;
  align-items: center;
  background: #fff;
  border-bottom: 1px solid #b4c9cd;
  color: #3d3d3d;
}
.bookmarks a { display: flex; align-items: center; gap: 8px; white-space: nowrap; }
.bookmarks .pre { white-space: pre; }
.bookmarks button { font-size: 16px; }

/* Jeedom */
.jeedom {
  flex: 1;
  display: flex;
  flex-direction: column;
  background: #191919;
  color: #c6c6c6;
  font-family: Roboto, sans-serif;
  font-size: 14px;
}
.jbar { height: 50px; display: flex; align-items: center; padding: 0 15px 0 7px; background: #272928; }
.logo { padding-bottom: 4px; }
.logo-text { font: bold 14px "Liberation Sans", sans-serif; }
.jmenu { display: flex; padding-left: 5px; }
.jmenu a { display: flex; align-items: center; gap: 3px; padding: 0 15px; }
.caret { border: 5px solid transparent; border-top-color: currentColor; border-bottom: 0; margin: 3px 0 0 3px; }
.summary { margin-left: auto; display: flex; align-items: center; gap: 1px; font-size: 10px; padding-top: 6px; }
.summary span { padding-bottom: 6px; margin-right: 5px; }
.summary .thermo { margin: 0 3px; }
.count {
  width: 21px;
  height: 22px;
  margin: 0 55px 0 52px;
  background: #c17d29;
  color: #f0f0f0;
  font: bold 13px/24px Roboto, sans-serif;
  text-align: center;
}
.jclock { align-self: flex-start; padding-top: 7px; }
.help { margin-left: 33px; }
.jmain { flex: 1; display: flex; flex-direction: column; padding: 5px 15px 14px 6px; }
.topline { display: flex; justify-content: space-between; align-items: flex-start; }
.jtabs { display: flex; background: #111315; }
.jtabs a { height: 41px; display: flex; align-items: center; gap: 4px; }
.jback { width: 44px; justify-content: center; }
.jtabs .jtab { padding: 0 7px; }
.jtabs .jtab-on { padding: 0 15px; background: linear-gradient(#94ca02, #94ca02) bottom / 100% 1px no-repeat #222; }
.actions { display: flex; color: #eee; font-size: 12px; font-weight: 500; }
.actions button { height: 28px; display: flex; align-items: center; gap: 3px; padding: 0 7px; white-space: nowrap; }
.actions .red { padding: 0 8px; }
.blue { background: #326da3; }
.grey { background: #464749; }
.green { background: #31863b; }
.red { background: #bd393d; }
.panel { flex: 1; position: relative; margin-right: 1px; padding-top: 2px; background: #212121; color: #aaa; }
.panel h2 {
  display: flex;
  align-items: center;
  gap: 7px;
  margin: 0 0 16px 12px;
  font-size: 17px;
  line-height: 20px;
  font-weight: 400;
  color: #c6c6c6;
}
.panel .sub { margin-left: 26px; }
.row { display: grid; grid-template-columns: 320px 1fr; column-gap: 28px; padding-bottom: 3px; }
.row > label, .lab { text-align: right; font-weight: 500; line-height: 26px; }
.field { position: relative; max-width: 292px; height: 32px; }
.field input, .field select {
  width: 100%;
  height: 32px;
  border: 0;
  border-radius: 0;
  padding: 0 11px;
  background: #2f2f2f;
  color: #aaa;
  font: 14px Roboto, sans-serif;
  appearance: none;
}
.field input::placeholder { color: #555; }
.select::after {
  content: "";
  position: absolute;
  right: 7px;
  top: 10px;
  border: 6px solid transparent;
  border-top-color: #aaa;
  border-bottom: 0;
}
.checks { padding-bottom: 6px; }
.checks.last { padding-bottom: 0; }
.row > .lab { line-height: 24px; }
.opts { display: flex; flex-wrap: wrap; gap: 11px; line-height: 24px; }
.opts.wide { gap: 14px; }
.opts label { display: flex; align-items: center; gap: 5px; }
.opts input { appearance: none; width: 15px; height: 15px; margin: 0; background: #2f2f2f; display: block; }
.tick { position: relative; color: #c6c6c6; }
.tick svg { position: absolute; left: -1px; top: 0; pointer-events: none; }
.tcp { margin: 0 0 4px 32px; }
.tcp-text { font: bold 13px "Open Sans", sans-serif; fill: #538dd0; }
.scroll { position: absolute; right: 0; top: 31px; bottom: 0; width: 10px; background: #464646; }

/* Windows taskbar */
.taskbar { height: 40px; display: flex; align-items: stretch; background: #1a2a2f; color: #fff; }
.taskbar button { display: grid; place-items: center; }
.start { width: 48px; }
.search {
  width: 344px;
  display: flex;
  align-items: center;
  gap: 12px;
  padding: 0 11px;
  background: #f1f1f1;
  border: 1px solid #bbb;
}
.search input { flex: 1; border: 0; padding: 0; background: none; font: 14px "Open Sans", sans-serif; appearance: none; }
.search input::placeholder { color: #222; }
.sys { display: flex; margin-right: 2px; }
.sys button { width: 48px; }
.apps { display: flex; }
.apps button { width: 41px; position: relative; }
.mailbox { margin: 4px 0 0 4px; }
.run::after { content: ""; position: absolute; left: 5px; right: 4px; bottom: 0; height: 2px; background: #76b9ed; }
.on { background: #485559; }
.apps .on::after { left: 0; right: 0; }
.mail { font: 600 12px "Open Sans", sans-serif; fill: #fff; }
.ppt { font: bold 10px "Open Sans", sans-serif; fill: #fff; }
.nnum { font: 11px "Open Sans", sans-serif; fill: #fff; }
.tray { display: flex; align-items: center; gap: 11px; margin-left: 7px; }
.tray svg { fill: none; stroke: #fff; stroke-width: 1.100; }
.tclock { margin-left: auto; width: 66px; line-height: 18px; padding-top: 2px; font-size: 11px; text-align: center; }
.notif { width: 50px; border-right: 1px solid #7c878b; margin-right: 4px; }
```
